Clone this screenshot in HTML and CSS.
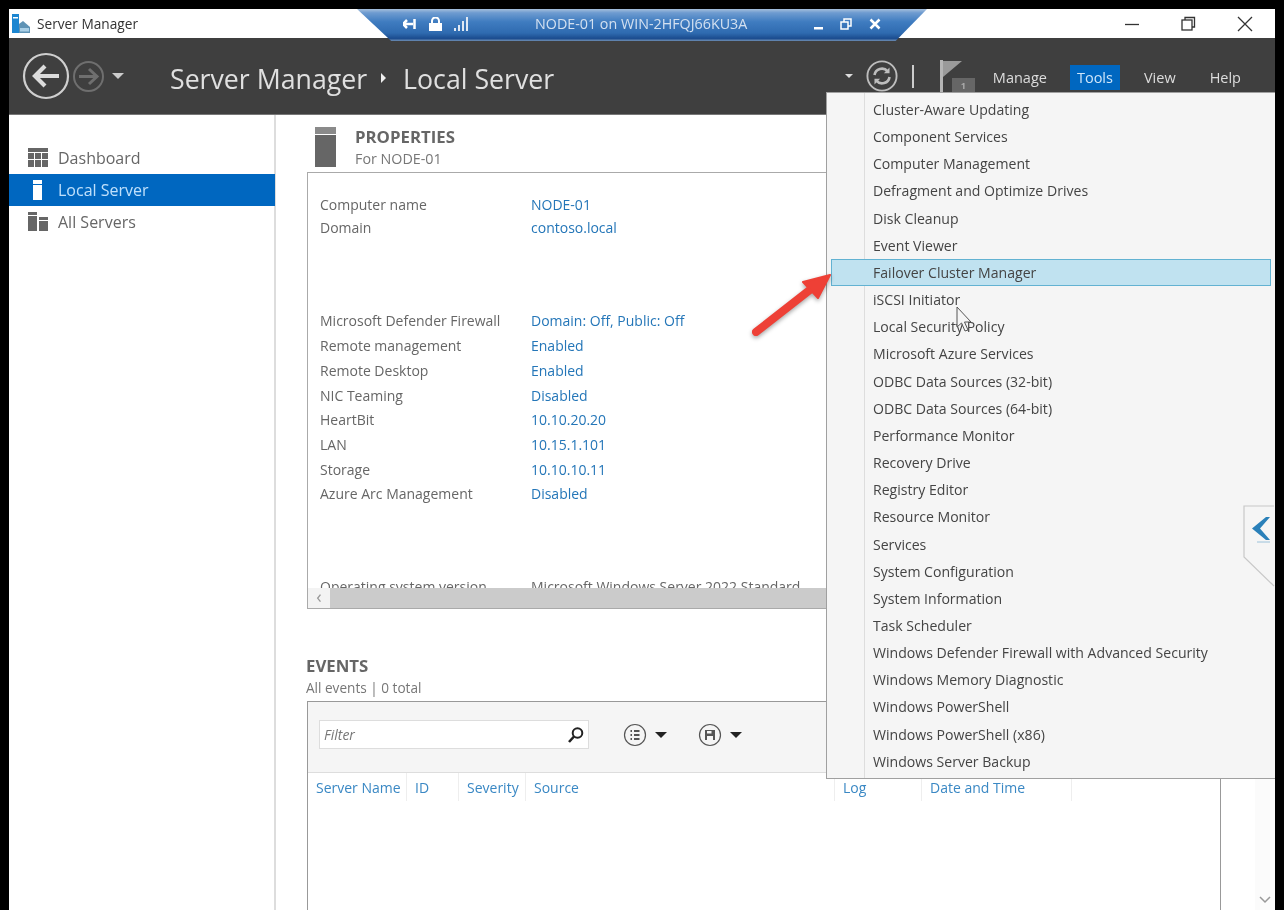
FILE: index.html
```html
<!DOCTYPE html>
<html lang="en">
<head>
  <meta charset="UTF-8">
  <title>Server Manager</title>
  <link rel="stylesheet" href="styles.css">
</head>
<body>
  <div class="window">
    <div class="titlebar">
      <svg class="app-icon" width="18" height="19" viewBox="0 0 18 19">
        <rect x="0" y="0" width="7" height="19" fill="#1c86d1"/>
        <rect x="1" y="3" width="5" height="1.500" fill="#fff"/>
        <path d="M7 10 L11 7 L18 13 V19 H7 Z" fill="#5f93b5"/>
        <rect x="8" y="14" width="9" height="3.500" fill="#a9cfe6"/>
      </svg>
      <span class="app-name">Server Manager</span>
      <div class="win-buttons">
        <svg width="15" height="16" viewBox="0 0 15 16"><path d="M0 8.500 H14" stroke="#333" stroke-width="1.300"/></svg>
        <svg width="15" height="16" viewBox="0 0 15 16" fill="none" stroke="#333" stroke-width="1.300"><rect x="1" y="4" width="10" height="10"/><path d="M4 4 V1.500 H13.500 V11 H11"/></svg>
        <svg width="16" height="16" viewBox="0 0 16 16"><path d="M1 1 L15 15 M15 1 L1 15" stroke="#333" stroke-width="1.300"/></svg>
      </div>
    </div>

    <div class="header">
      <div class="nav-buttons">
        <svg class="back" width="48" height="48" viewBox="0 0 48 48" fill="none">
          <circle cx="24" cy="24" r="22" stroke="#cfcfcf" stroke-width="2.200"/>
          <path d="M37 24 H13 M23 14 L13 24 L23 34" stroke="#dcdcdc" stroke-width="4.200"/>
        </svg>
        <svg class="forward" width="31" height="31" viewBox="0 0 31 31" fill="none">
          <circle cx="15.500" cy="15.500" r="14.500" stroke="#6f6f6f" stroke-width="2"/>
          <path d="M6 15.500 H23 M16 8 L24 15.500 L16 23" stroke="#6f6f6f" stroke-width="3"/>
        </svg>
        <span class="drop light"></span>
      </div>
      <div class="crumbs">
        <span>Server Manager</span>
        <span class="crumb-arrow"></span>
        <span>Local Server</span>
      </div>
      <div class="commands">
        <span class="drop small"></span>
        <svg class="refresh" width="32" height="32" viewBox="0 0 34 34" fill="none" stroke="#bdbdbd">
          <circle cx="17" cy="17" r="15.500" stroke-width="2"/>
          <path d="M9 16 A8 8 0 0 1 23 12 M25 18 A8 8 0 0 1 11 22" stroke-width="2.800"/>
          <path d="M25 8 V14 H19 Z M9 26 V20 H15 Z" fill="#bdbdbd" stroke="none"/>
        </svg>
        <span class="divider"></span>
        <div class="flag">
          <svg width="22" height="32" viewBox="0 0 22 32">
            <rect x="0" y="0" width="3" height="32" fill="#b5b5b5"/>
            <path d="M3 1 L22 1 L3 17 Z" fill="#9a9a9a"/>
          </svg>
          <span class="flag-count">1</span>
        </div>
        <span class="cmd manage">Manage</span>
        <span class="cmd tools">Tools</span>
        <span class="cmd view">View</span>
        <span class="cmd help">Help</span>
      </div>
    </div>

    <div class="main">
      <div class="sidebar">
        <div class="side-item">
          <svg width="20" height="20" viewBox="0 0 20 20" fill="#666"><rect width="20" height="4"/><rect y="5" width="6" height="6"/><rect x="7" y="5" width="6" height="6"/><rect x="14" y="5" width="6" height="6"/><rect y="12" width="6" height="7"/><rect x="7" y="12" width="6" height="7"/><rect x="14" y="12" width="6" height="7"/></svg>
          <span>Dashboard</span>
        </div>
        <div class="side-item active">
          <svg width="20" height="20" viewBox="0 0 20 20" fill="#fff"><rect x="5" y="0" width="9" height="4"/><rect x="5" y="5" width="9" height="15"/></svg>
          <span>Local Server</span>
        </div>
        <div class="side-item">
          <svg width="20" height="20" viewBox="0 0 20 20" fill="#666"><rect width="9" height="3"/><rect y="4" width="9" height="15"/><rect x="11" y="5" width="9" height="3"/><rect x="11" y="9" width="9" height="10"/></svg>
          <span>All Servers</span>
        </div>
      </div>

      <div class="content">
        <div class="section-head">
          <svg width="21" height="40" viewBox="0 0 21 40"><rect width="21" height="7" fill="#8a8a8a"/><rect y="8" width="21" height="32" fill="#666"/></svg>
          <div>
            <div class="section-title">PROPERTIES</div>
            <div class="section-sub">For NODE-01</div>
          </div>
        </div>
        <div class="props-box">
          <div class="props-scroll">
            <div class="props top-group">
              <span>Computer name</span><a>NODE-01</a>
              <span>Domain</span><a>contoso.local</a>
            </div>
            <div class="props mid-group">
              <span>Microsoft Defender Firewall</span><a>Domain: Off, Public: Off</a>
              <span>Remote management</span><a>Enabled</a>
              <span>Remote Desktop</span><a>Enabled</a>
              <span>NIC Teaming</span><a>Disabled</a>
              <span>HeartBit</span><a>10.10.20.20</a>
              <span>LAN</span><a>10.15.1.101</a>
              <span>Storage</span><a>10.10.10.11</a>
              <span>Azure Arc Management</span><a>Disabled</a>
            </div>
            <div class="props last-group">
              <span>Operating system version</span><span>Microsoft Windows Server 2022 Standard</span>
            </div>
          </div>
          <div class="hscroll"><span class="hscroll-btn">&#8249;</span></div>
        </div>

        <div class="events-title">EVENTS</div>
        <div class="events-sub">All events | 0 total</div>
        <div class="events-box">
          <div class="events-tools">
            <div class="filter">
              <span>Filter</span>
              <svg width="18" height="18" viewBox="0 0 18 18" fill="none" stroke="#222"><circle cx="10.500" cy="7" r="4.800" stroke-width="2"/><path d="M7 10.500 L2 16" stroke-width="2.600"/></svg>
            </div>
            <svg class="tool-btn" width="24" height="24" viewBox="0 0 24 24" fill="none" stroke="#555"><circle cx="12" cy="12" r="10.500" stroke-width="1.200"/><path d="M7.500 8 H9 M11 8 H16.500 M7.500 12 H9 M11 12 H16.500 M7.500 16 H9 M11 16 H16.500" stroke-width="1.800"/></svg>
            <span class="drop dark"></span>
            <svg class="tool-btn save" width="24" height="24" viewBox="0 0 24 24" fill="none" stroke="#555"><circle cx="12" cy="12" r="10.500" stroke-width="1.200"/><path d="M7 7 H17 V17 H7 Z" fill="#555" stroke="none"/><rect x="9" y="8" width="4.500" height="2.500" fill="#f5f5f5" stroke="none"/><rect x="9" y="13" width="6" height="4" fill="#f5f5f5" stroke="none"/></svg>
            <span class="drop dark"></span>
          </div>
          <div class="events-cols">
            <span class="col c-name">Server Name</span>
            <span class="col c-id">ID</span>
            <span class="col c-sev">Severity</span>
            <span class="col c-src">Source</span>
            <span class="col c-log">Log</span>
            <span class="col c-date">Date and Time</span>
          </div>
        </div>
      </div>

      <div class="vscroll">
        <svg width="12" height="8" viewBox="0 0 12 8" fill="none"><path d="M1 1 L6 6 L11 1" stroke="#999" stroke-width="1.500"/></svg>
      </div>
    </div>

    <div class="rdp-bar">
      <div class="rdp-icons">
        <svg width="14" height="12" viewBox="0 0 14 12"><path d="M0 6 H10 M11.500 1 V11 M4 2 L0 6 L4 10" stroke="#fff" stroke-width="2.500" fill="none"/></svg>
        <svg width="13" height="14" viewBox="0 0 13 14"><rect x="0" y="6" width="13" height="8" fill="#fff"/><path d="M3 6 V4 A3.500 3.500 0 0 1 10 4 V6" stroke="#fff" stroke-width="2" fill="none"/></svg>
        <svg width="14" height="14" viewBox="0 0 14 14" fill="#dfe8f3"><rect x="0" y="11" width="2" height="3"/><rect x="4" y="8" width="2" height="6"/><rect x="8" y="4" width="2" height="10"/><rect x="12" y="0" width="2" height="14"/></svg>
      </div>
      <span class="rdp-text">NODE-01 on WIN-2HFQJ66KU3A</span>
      <div class="rdp-buttons">
        <svg width="9" height="12" viewBox="0 0 9 12"><rect x="0" y="9" width="9" height="2.500" fill="#fff"/></svg>
        <svg width="12" height="12" viewBox="0 0 12 12" fill="none" stroke="#fff" stroke-width="1.500"><rect x="1" y="4" width="7" height="7"/><path d="M4 4 V1 H11 V8 H8"/></svg>
        <svg width="12" height="12" viewBox="0 0 12 12"><path d="M1.500 1.500 L10.500 10.500 M10.500 1.500 L1.500 10.500" stroke="#fff" stroke-width="2.500"/></svg>
      </div>
    </div>

    <div class="menu">
      <div class="menu-item">Cluster-Aware Updating</div>
      <div class="menu-item">Component Services</div>
      <div class="menu-item">Computer Management</div>
      <div class="menu-item">Defragment and Optimize Drives</div>
      <div class="menu-item">Disk Cleanup</div>
      <div class="menu-item">Event Viewer</div>
      <div class="menu-item selected">Failover Cluster Manager</div>
      <div class="menu-item">iSCSI Initiator</div>
      <div class="menu-item">Local Security Policy</div>
      <div class="menu-item">Microsoft Azure Services</div>
      <div class="menu-item">ODBC Data Sources (32-bit)</div>
      <div class="menu-item">ODBC Data Sources (64-bit)</div>
      <div class="menu-item">Performance Monitor</div>
      <div class="menu-item">Recovery Drive</div>
      <div class="menu-item">Registry Editor</div>
      <div class="menu-item">Resource Monitor</div>
      <div class="menu-item">Services</div>
      <div class="menu-item">System Configuration</div>
      <div class="menu-item">System Information</div>
      <div class="menu-item">Task Scheduler</div>
      <div class="menu-item">Windows Defender Firewall with Advanced Security</div>
      <div class="menu-item">Windows Memory Diagnostic</div>
      <div class="menu-item">Windows PowerShell</div>
      <div class="menu-item">Windows PowerShell (x86)</div>
      <div class="menu-item">Windows Server Backup</div>
    </div>

    <svg class="collapse-tab" width="32" height="82" viewBox="0 0 32 82">
      <path d="M31 1 H1 V52 L31 81" fill="#f5f5f5" stroke="#c8c8c8" stroke-width="1.200"/>
      <path d="M23 12 L9 23.500 L23 35 H27 L17 23.500 L27 12 Z" fill="#2a80b9"/>
      <path d="M14 37 H27" stroke="#9cc2da" stroke-width="1"/>
    </svg>

    <svg class="arrow" width="90" height="76" viewBox="0 0 90 76">
      <path d="M11 71 L66 28" stroke="#ee4036" stroke-width="8" stroke-linecap="round"/>
      <path d="M85 14 L58 21 L73 37 Z" fill="#ee4036" stroke="#ee4036" stroke-width="2" stroke-linejoin="round"/>
    </svg>

    <svg class="cursor" width="20" height="30" viewBox="0 0 20 30">
      <path d="M1 1 V21 L5.500 17 L9 25 L12 24 L8.500 16 L15 16 Z" fill="#f5f5f5" fill-opacity=".7" stroke="#555" stroke-width="1"/>
    </svg>
  </div>
</body>
</html>
```

FILE: styles.css
```css
* {
  box-sizing: border-box;
}
html, body {
  margin: 0;
  height: 100%;
  overflow: hidden;
}
body {
  background-color: #000;
  font-family: "Open Sans", "Liberation Sans", sans-serif;
  font-size: 14px;
  color: #666;
}
.window {
  position: relative;
  margin: 9px 9px 0 9px;
  height: 901px;
  display: flex;
  flex-direction: column;
  background-color: #fff;
  overflow: hidden;
  filter: blur(0.4px);
}

/* title bar */
.titlebar {
  height: 29px;
  flex: none;
  display: flex;
  align-items: center;
  padding-left: 3px;
  color: #333;
}
.app-icon {
  margin-right: 7px;
}
.app-name {
  font-size: 13.700px;
}
.win-buttons {
  margin-left: auto;
  display: flex;
  gap: 41px;
  padding-right: 22px;
}

/* dark header */
.header {
  height: 77px;
  flex: none;
  display: flex;
  align-items: center;
  background-color: #3f3f3f;
  border-bottom: 1px solid #777;
  color: #e4e4e4;
}
.nav-buttons {
  display: flex;
  align-items: center;
  width: 161px;
  padding-left: 13px;
}
.forward {
  margin-left: 3px;
}
.drop {
  display: inline-block;
  width: 0;
  height: 0;
  border-left: 6px solid transparent;
  border-right: 6px solid transparent;
  border-top: 6px solid #222;
}
.drop.light {
  margin-left: 8px;
  border-top-color: #ccc;
}
.drop.small {
  border-left-width: 4px;
  border-right-width: 4px;
  border-top: 4px solid #ddd;
}
.crumbs {
  display: flex;
  align-items: center;
  padding-top: 4px;
  font-size: 26.700px;
  color: #e0e0e0;
}
.crumb-arrow {
  width: 0;
  height: 0;
  margin: 0 17px 0 14px;
  border-top: 5px solid transparent;
  border-bottom: 5px solid transparent;
  border-left: 5px solid #eee;
}
.commands {
  margin-left: auto;
  display: flex;
  align-items: center;
  height: 100%;
  padding-right: 34px;
}
.refresh {
  margin-left: 13px;
}
.divider {
  width: 2px;
  height: 23px;
  margin: 0 26px 0 14px;
  background-color: #ccc;
}
.flag {
  position: relative;
  width: 35px;
  height: 32px;
  margin-right: 18px;
}
.flag-count {
  position: absolute;
  right: 0;
  bottom: 0;
  width: 23px;
  height: 14px;
  background-color: #666;
  color: #aaa;
  font-size: 9px;
  font-weight: 700;
  line-height: 16px;
  text-align: center;
}
.cmd {
  margin-top: 2px;
  font-size: 14.500px;
  color: #ddd;
  line-height: 25px;
}
.manage {
  margin-right: 23px;
}
.tools {
  width: 50px;
  text-align: center;
  background-color: #0067c0;
  color: #cfe6fa;
  margin-right: 24px;
}
.view {
  margin-right: 34px;
}

/* sidebar and content */
.main {
  flex: 1;
  min-height: 0;
  display: flex;
}
.sidebar {
  width: 267px;
  flex: none;
  padding-top: 27px;
  border-right: 2px solid #ddd;
}
.side-item {
  display: flex;
  align-items: center;
  gap: 10px;
  height: 32px;
  padding-left: 19px;
  font-size: 16px;
  color: #666;
}
.side-item.active {
  background-color: #0067c0;
  color: #bfe0fb;
  margin-right: -1px;
}
.content {
  flex: 1;
  min-width: 0;
  padding: 12px 34px 0 31px;
}
.section-head {
  display: flex;
  gap: 19px;
  padding-left: 8px;
  height: 45px;
}
.section-title, .events-title {
  font-size: 16.800px;
  font-weight: 700;
  color: #666;
  line-height: 20px;
}
.section-sub, .events-sub {
  font-size: 13.600px;
  color: #777;
  line-height: 22px;
}
.section-sub {
  margin-top: 1px;
  font-size: 14.300px;
}
.props-box {
  height: 437px;
  width: 700px;
  display: flex;
  flex-direction: column;
  border: 1px solid #aaa;
}
.props-scroll {
  flex: 1;
  min-height: 0;
  overflow: hidden;
  padding: 20px 0 0 12px;
}
.props {
  display: grid;
  grid-template-columns: 211px auto;
  white-space: nowrap;
  line-height: 24.700px;
}
.props a {
  color: #2476b8;
}
.top-group {
  line-height: 23.200px;
}
.mid-group {
  margin-top: 70px;
}
.last-group {
  margin-top: 68px;
}
.hscroll {
  flex: none;
  height: 20px;
  background-color: #cbcbcb;
}
.hscroll-btn {
  display: block;
  width: 22px;
  height: 20px;
  background-color: #f3f3f3;
  color: #999;
  font-size: 18px;
  line-height: 17px;
  text-align: center;
}
.events-title {
  margin: 47px 0 0 -1px;
}
.events-sub {
  margin: 0 0 1px -1px;
  line-height: 24px;
}
.events-box {
  height: 260px;
  border: 1px solid #999;
  border-bottom: none;
}
.events-tools {
  height: 71px;
  display: flex;
  align-items: center;
  padding: 0 0 5px 11px;
  background-color: #f5f5f5;
  border-bottom: 1px solid #ddd;
}
.filter {
  width: 270px;
  height: 29px;
  display: flex;
  align-items: center;
  justify-content: space-between;
  padding: 0 3px 0 4px;
  margin-right: 34px;
  background-color: #fff;
  border: 1px solid #ddd;
  font-style: italic;
  color: #777;
}
.drop.dark {
  margin: 0 31px 0 8px;
}
.events-cols {
  position: relative;
  display: flex;
  height: 28px;
  line-height: 29px;
  color: #3a88c4;
}
.col {
  flex: none;
  padding-left: 8px;
  border-right: 1px solid #eee;
}
.c-name {
  width: 99px;
}
.c-id {
  width: 52px;
}
.c-sev {
  width: 67px;
}
.c-src {
  width: 309px;
}
.c-log {
  width: 87px;
}
.c-date {
  width: 150px;
}
.vscroll {
  width: 20px;
  flex: none;
  display: flex;
  align-items: flex-end;
  justify-content: center;
  padding-bottom: 6px;
  background-color: #fbfbfb;
}

/* things that lie over the window */
.rdp-bar {
  position: absolute;
  left: 348px;
  top: 0;
  width: 570px;
  height: 32px;
  display: flex;
  align-items: center;
  padding: 0 0 3px 46px;
  clip-path: polygon(0 0, 100% 0, 94.500% 100%, 6% 100%);
  background: linear-gradient(#a5bfdc 0, #6e9bd0 12%, #3f7cc0 40%, #2f6bb0 75%, #1b4c8f 92%, #6f8fb5 100%);
  color: #d3e0f0;
  font-size: 14.300px;
}
.rdp-icons {
  display: flex;
  align-items: center;
  gap: 12px;
}
.rdp-text {
  margin-left: 67px;
}
.rdp-buttons {
  display: flex;
  align-items: center;
  gap: 17px;
  margin-left: 67px;
}
.menu {
  position: absolute;
  left: 817px;
  top: 83px;
  width: 449px;
  height: 687px;
  padding-top: 3px;
  background: linear-gradient(to right, #f5f5f5 37px, #ddd 37px, #ddd 38px, #f5f5f5 38px);
  border: 1px solid #a0a0a0;
  border-right: none;
  color: #444;
  font-size: 14.080px;
}
.menu-item {
  height: 27.170px;
  line-height: 27px;
  padding-left: 46px;
  white-space: nowrap;
}
.menu-item.selected {
  margin: 0 4px;
  padding-left: 42px;
  background-color: #c0e2f0;
  outline: 1.500px solid #62b2d2;
  outline-offset: -1.500px;
}
.collapse-tab {
  position: absolute;
  right: 0;
  top: 496px;
}
.arrow {
  position: absolute;
  left: 736px;
  top: 252px;
  filter: drop-shadow(0 2px 2px rgba(0, 0, 0, 0.35));
}
.cursor {
  position: absolute;
  left: 947px;
  top: 297px;
}
```
